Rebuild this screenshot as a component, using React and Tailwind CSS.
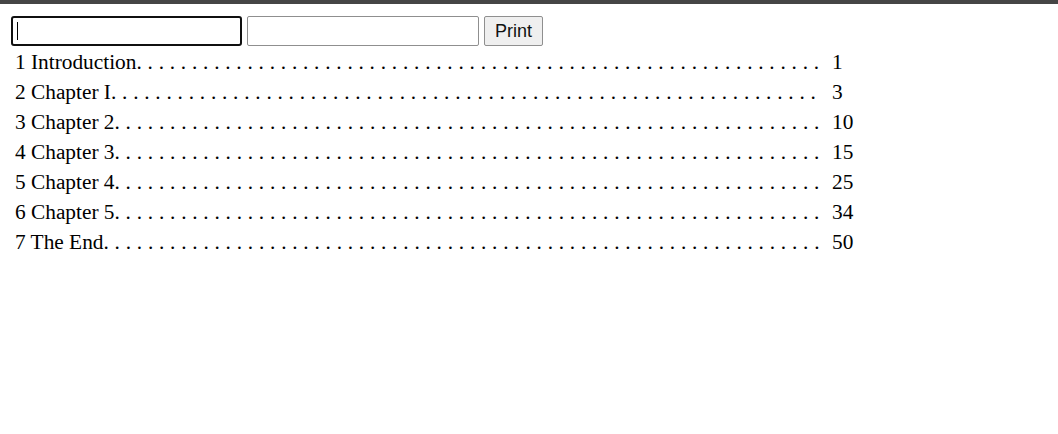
const entries = [
  { title: "1 Introduction", page: "1" },
  { title: "2 Chapter I", page: "3" },
  { title: "3 Chapter 2", page: "10" },
  { title: "4 Chapter 3", page: "15" },
  { title: "5 Chapter 4", page: "25" },
  { title: "6 Chapter 5", page: "34" },
  { title: "7 The End", page: "50" },
];

const leader = Array(110).fill(".").join(" ");

export default function App() {
  return (
    <div className="min-h-screen bg-white text-black">
      <div className="h-[4px] bg-[#454545]" />
      <div className="pl-[11px] pt-[12px]">
        <div className="flex items-center h-[30px]">
          <div className="relative">
            <input
              type="text"
              className="w-[231px] h-[30px] rounded-[3px] border-2 border-[#101010] bg-white outline-none"
            />
            <span className="absolute left-[6px] top-[6px] w-px h-[18px] bg-black" />
          </div>
          <input
            type="text"
            className="ml-[5px] w-[232px] h-[30px] rounded-[2px] border border-[#8f8f8f] bg-white outline-none"
          />
          <button className="ml-[5px] w-[59px] h-[30px] rounded-[2px] border border-[#8f8f8f] bg-[#efefef] text-[18px] text-[#111] font-['Liberation_Sans',Arial,sans-serif]">
            Print
          </button>
        </div>
        <div className="mt-[1px] pl-[4px] font-['Liberation_Serif','Times_New_Roman',serif] text-[21.33px] leading-[30px]">
          {entries.map((e) => (
            <div key={e.title} className="flex h-[30px]">
              <div className="w-[811px] h-[30px] overflow-hidden break-words">
                {e.title}
                <span className="tracking-[0.22px]">{leader}</span>
              </div>
              <div className="pl-[6px]">{e.page}</div>
            </div>
          ))}
        </div>
      </div>
    </div>
  );
}
